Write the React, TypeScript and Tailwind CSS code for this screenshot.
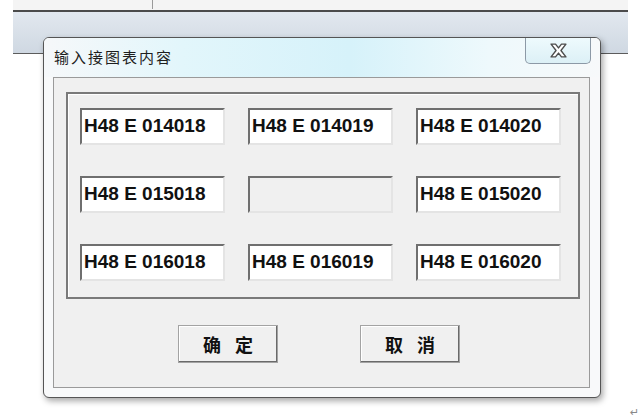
const rows = [
  ["H48 E 014018", "H48 E 014019", "H48 E 014020"],
  ["H48 E 015018", "", "H48 E 015020"],
  ["H48 E 016018", "H48 E 016019", "H48 E 016020"],
];

const cjk = "font-['Microsoft_YaHei','Noto_Sans_CJK_SC',sans-serif]";

const SheetBox = ({value}: {value: string}) => (
  <div
    className={`w-[145px] h-[37px] flex items-center pl-[2px] pb-[3px] border-2 border-t-[#6f6f6f] border-l-[#6f6f6f] border-b-[#e4e4e4] border-r-[#e4e4e4] ${value ? "bg-white" : "bg-[#f0f0f0]"}`}
  >
    <span className="font-['Liberation_Sans',Arial,sans-serif] font-bold text-[19px] leading-none text-[#111] whitespace-pre">
      {value}
    </span>
  </div>
);

const DialogButton = ({left, right}: {left: string; right: string}) => (
  <button
    className={`w-[100px] h-[38px] flex items-center justify-center gap-[14px] bg-[#f0f0f0] border border-[#a3a3a3] shadow-[inset_-1px_-1px_0_#6a6a6a,inset_1px_1px_0_#ffffff] ${cjk} font-bold text-[18px] text-[#111]`}
  >
    <span>{left}</span>
    <span>{right}</span>
  </button>
);

const CloseGlyph = () => (
  <svg width="17" height="15" viewBox="0 0 16 14">
    <polygon
      points="1,1 5.2,1 8,4.6 10.8,1 15,1 10.3,7 15,13 10.8,13 8,9.4 5.2,13 1,13 5.7,7"
      fill="#ffffff"
      stroke="#4d4d4d"
      strokeWidth="1.3"
      strokeLinejoin="round"
    />
  </svg>
);

export default function App() {
  return (
    <div className="relative w-[640px] h-[420px] bg-white overflow-hidden">
      {/* document behind the dialog */}
      <div className="ml-[13px] w-[615px] h-[10px] bg-[#f4f4f4] flex">
        <div className="ml-[139px] w-px h-[9px] bg-[#9a9a9a]" />
      </div>
      <div className="ml-[13px] w-[615px] h-[44px] border-t-2 border-t-[#4b4b4b] border-b border-b-[#5c5c5c] bg-gradient-to-b from-[#e2e8ef] to-[#cfd8e2]" />

      {/* dialog window */}
      <div className="absolute left-[43px] top-[37px] w-[558px] h-[361px] flex flex-col rounded-[6px] border border-[#555] bg-[#f8f9fa] shadow-[2px_3px_6px_rgba(0,0,0,0.35)] overflow-hidden">
        <div className="h-[39px] flex items-start justify-between bg-[linear-gradient(90deg,#f6f8fa_0%,#e2f6fb_25%,#d6f2fa_55%,#eef9fc_80%,#f7f9fa_100%)]">
          <div className={`mt-[10px] ml-[10px] ${cjk} text-[15px] tracking-[2px] text-[#1e1e1e] leading-[18px]`}>
            输入接图表内容
          </div>
          <div className="mr-[9px] w-[66px] h-[26px] flex items-center justify-center rounded-b-[5px] border border-t-0 border-[#8c99a6] bg-[linear-gradient(180deg,#eefafd,#dcf0f6)]">
            <CloseGlyph />
          </div>
        </div>

        <div className="ml-[9px] w-[537px] h-[311px] border border-[#9a9a9a] bg-[#f0f0f0] flex flex-col">
          <div className="ml-[12px] mt-[14px] w-[514px] h-[207px] border-2 border-[#7a7a7a] shadow-[inset_1px_1px_0_#fff] pl-[12px] pt-[14px]">
            <div className="grid grid-cols-[145px_145px_145px] gap-x-[23px] gap-y-[31px]">
              {rows.flat().map((value, i) => (
                <SheetBox key={i} value={value} />
              ))}
            </div>
          </div>

          <div className="mt-[26px] flex">
            <div className="ml-[124px]">
              <DialogButton left="确" right="定" />
            </div>
            <div className="ml-[82px]">
              <DialogButton left="取" right="消" />
            </div>
          </div>
        </div>
      </div>

      <div className="absolute left-[630px] top-[405px] text-[11px] text-[#888] font-['DejaVu_Sans',sans-serif]">↵</div>
    </div>
  );
}
